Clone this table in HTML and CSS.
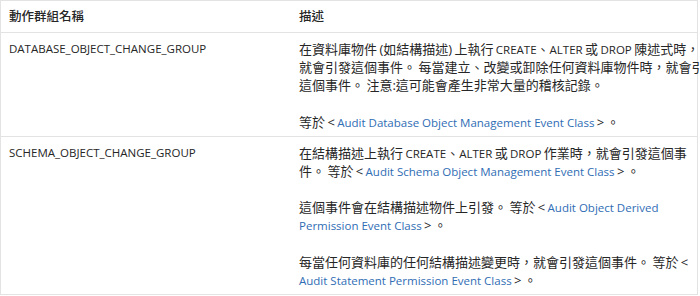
FILE: index.html
```html
<!DOCTYPE html>
<html lang="zh-Hant">

<head>
    <meta charset="UTF-8">
    <meta name="viewport" content="width=device-width, initial-scale=1.0">
    <title>稽核動作群組</title>
    <link rel="stylesheet" href="styles.css">
</head>

<body>
    <table class="audit-table">
        <thead>
            <tr>
                <th class="col-name">動作群組名稱</th>
                <th>描述</th>
            </tr>
        </thead>
        <tbody>
            <tr>
                <td class="group">DATABASE_OBJECT_CHANGE_GROUP</td>
                <td class="desc">
                    <p>在資料庫物件 (如結構描述) 上執行 <span class="en">CREATE</span>、<span class="en">ALTER</span> 或 <span class="en">DROP</span> 陳述式時，<br>就會引發這個事件。 每當建立、改變或卸除任何資料庫物件時，就會引發<br>這個事件。 注意:這可能會產生非常大量的稽核記錄。</p>
                    <p>等於 &lt; <a href="#">Audit Database Object Management Event Class</a> &gt; 。</p>
                </td>
            </tr>
            <tr>
                <td class="group">SCHEMA_OBJECT_CHANGE_GROUP</td>
                <td class="desc">
                    <p>在結構描述上執行 <span class="en">CREATE</span>、<span class="en">ALTER</span> 或 <span class="en">DROP</span> 作業時，就會引發這個事<br>件。 等於 &lt; <a href="#">Audit Schema Object Management Event Class</a> &gt; 。</p>
                    <p>這個事件會在結構描述物件上引發。 等於 &lt; <a href="#">Audit Object Derived<br>Permission Event Class</a> &gt; 。</p>
                    <p>每當任何資料庫的任何結構描述變更時，就會引發這個事件。 等於 &lt;<br><a href="#">Audit Statement Permission Event Class</a> &gt; 。</p>
                </td>
            </tr>
        </tbody>
    </table>
</body>

</html>
```

FILE: styles.css
```css
body {
    margin: 0;
    background: #ffffff;
    font-family: "Open Sans", "Noto Sans CJK TC", sans-serif;
    font-size: 13px;
    line-height: 18px;
    color: #262626;
}

.audit-table {
    width: 698px;
    table-layout: fixed;
    border-collapse: collapse;
    border: 1px solid #e3e3e3;
}

.audit-table th,
.audit-table td {
    text-align: left;
    vertical-align: top;
    padding: 7px 8px 5px;
    border-bottom: 1px solid #e3e3e3;
}

.audit-table th {
    font-size: 12.5px;
    font-weight: 500;
    padding-bottom: 6px;
}

.col-name {
    width: 274px;
}

/* latin runs are set a little smaller than the CJK text */
.group,
.en,
.desc a {
    font-size: 11.5px;
}

.en,
.desc a {
    line-height: 14px;
}

.desc p {
    margin: 0 0 18.5px;
    white-space: nowrap;
    word-spacing: -1px;
}

.desc p:last-child {
    margin-bottom: 0;
}

.desc a {
    color: #2f6db5;
    text-decoration: none;
    word-spacing: 0;
}
```
